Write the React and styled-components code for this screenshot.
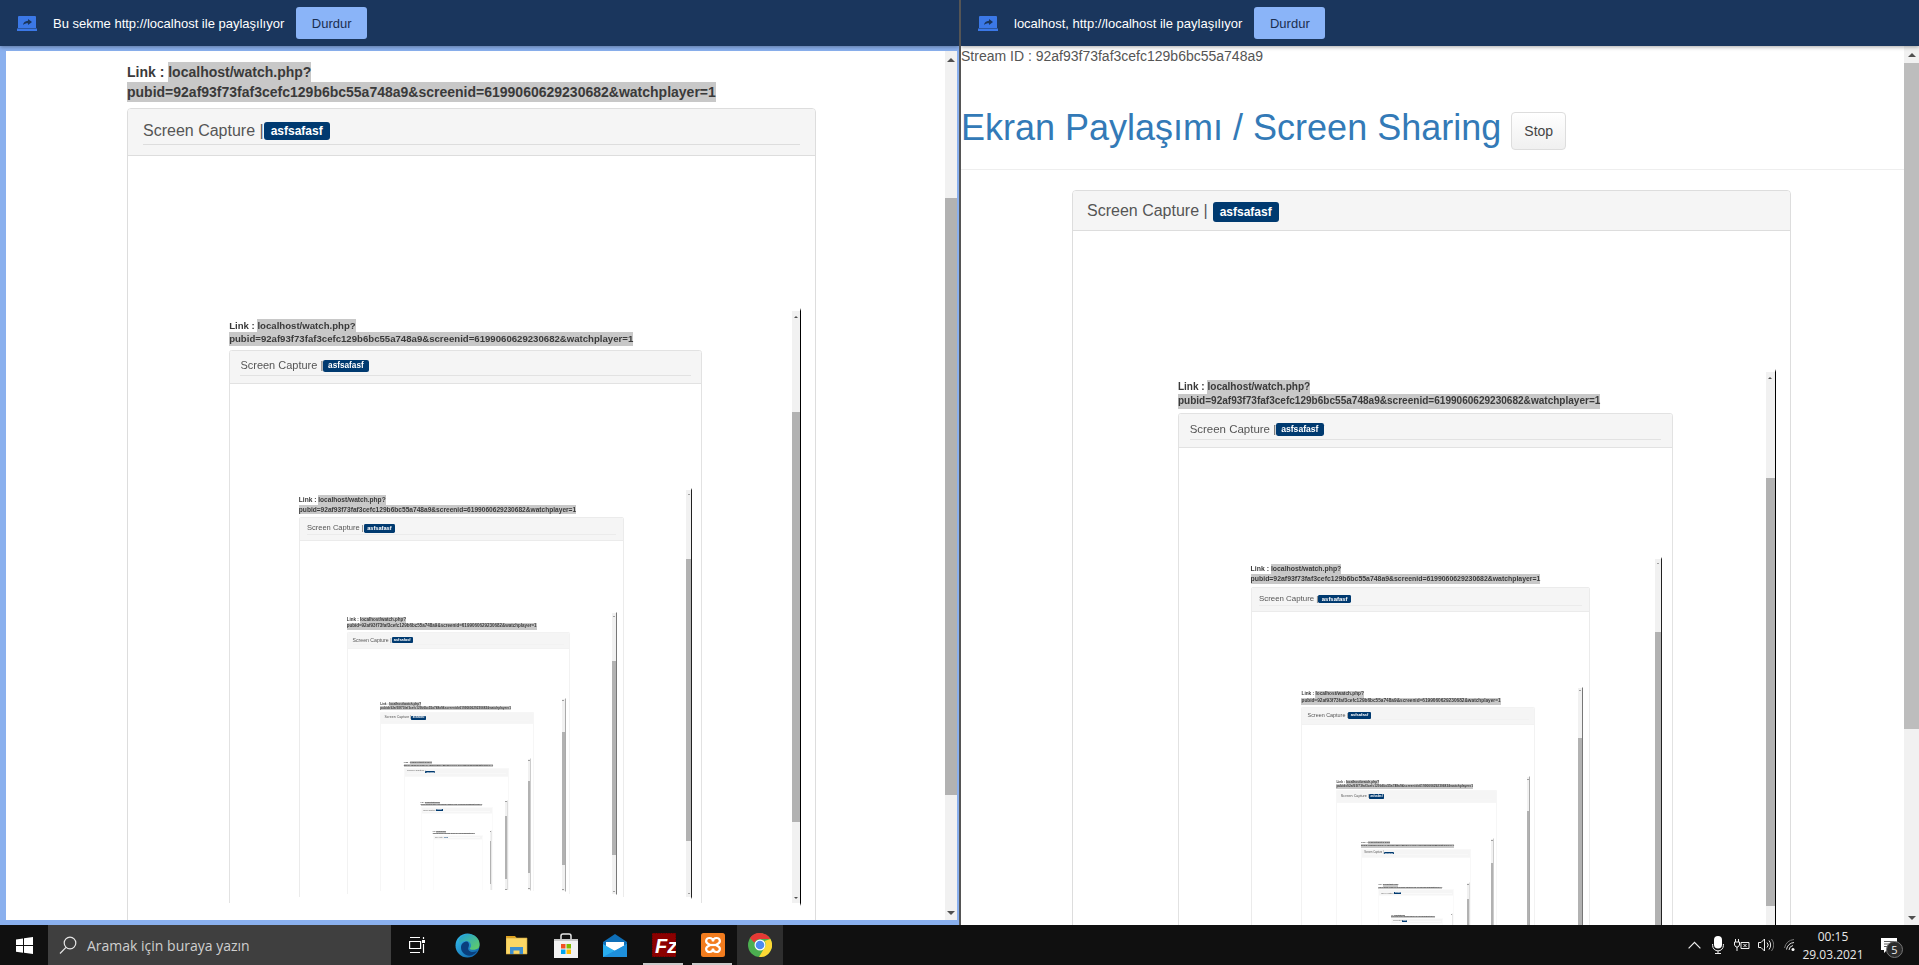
import React from 'react'
import styled, { createGlobalStyle } from 'styled-components'

const LINK_URL = 'pubid=92af93f73faf3cefc129b6bc55a748a9&screenid=6199060629230682&watchplayer=1'
const NESTED_ZOOM = 0.687

// thin lines can't go under 1px when zoomed, so they fade with the depth instead
const EDGE_COLORS = ['#000', '#000', '#222', '#777', '#aaa', '#ccc', '#ddd', '#e8e8e8']
const LINE_COLORS = ['#ddd', '#e2e2e2', '#ebebeb', '#f2f2f2', '#f6f6f6', '#f8f8f8', '#fafafa', '#fbfbfb']
const BLURS = [0, 0.25, 0.45, 0.65, 0.7, 0.7, 0.7, 0.7]

const GlobalStyle = createGlobalStyle`
  html, body { margin: 0; padding: 0; overflow: hidden; background: #fff; }
  * { box-sizing: border-box; }
  body { font-family: "Liberation Sans", Arial, sans-serif; font-size: 14px; color: #333; }
`

const Screen = styled.div`
  width: 1919px;
  height: 965px;
  display: flex;
  flex-direction: column;
  overflow: hidden;
`
const Panes = styled.div`
  height: 925px;
  display: flex;
`
const SharePane = styled.div`
  width: ${p => p.$width}px;
  flex: none;
  display: flex;
  flex-direction: column;
  overflow: hidden;
  background: #fff;
`
const Divider = styled.div`
  width: 2px;
  flex: none;
  background: #555;
`
const InfoBar = styled.div`
  height: 46px;
  flex: none;
  display: flex;
  align-items: center;
  padding-left: ${p => p.$inset}px;
  background: #1a365d;
  box-shadow: 0 1px 4px rgba(0, 0, 0, .35);
  position: relative;
  z-index: 1;
  color: #fff;
  font-size: 13px;
`
const ShareIcon = styled.svg`
  width: 20px;
  height: 15px;
  margin-right: 16px;
  margin-top: 1px;
`
const InfoText = styled.span`
  margin-right: 12px;
  white-space: nowrap;
`
const StopShare = styled.button`
  width: 71px;
  height: 32px;
  border: 0;
  border-radius: 3px;
  background: #8ab4f8;
  color: #1a2f50;
  font: 13px "Liberation Sans", Arial, sans-serif;
`

/* one captured tab, nested copies are the same thing zoomed down */
const Frame = styled.div`
  width: 959px;
  height: ${p => (p.$root ? 879 : 870)}px;
  flex: none;
  display: flex;
  overflow: hidden;
  background: #fff;
  border-style: solid;
  border-width: 5px 2px 5px 6px;
  border-color: ${p => (p.$root ? '#8ab0ee' : `#fff ${p.$edge} #fff #fff`)};
  ${p => !p.$root && `zoom: ${p.$zoom}; filter: blur(${p.$blur}px);`}
`
const TabPage = styled.div`
  flex: 1;
  min-width: 0;
  padding: 11px 0 0 121px;
`
const LinkLine = styled.div`
  font-weight: bold;
  line-height: 20px;
  white-space: nowrap;
  margin-bottom: 6px;
  color: #3a3a3a;
`
const Selected = styled.span`
  display: inline-block;
  height: 20px;
  background: #c8c8c8;
`
const Panel = styled.div`
  width: ${p => p.$width}px;
  border: 1px solid ${p => p.$line};
  border-radius: 4px;
  background: #fff;
`
const PanelHead = styled.div`
  background: #f5f5f5;
  border-bottom: 1px solid ${p => p.$line};
  border-radius: 3px 3px 0 0;
  padding: ${p => (p.$lined ? '12px 15px 10px' : '10px 14px 8px')};
`
const TitleRow = styled.div`
  height: ${p => (p.$lined ? 24 : 21)}px;
  display: flex;
  align-items: flex-start;
  border-bottom: ${p => (p.$lined ? `1px solid ${p.$line}` : '0')};
  font-size: 16px;
  line-height: 19px;
  color: #555;
  white-space: nowrap;
`
const Badge = styled.span`
  height: ${p => (p.$lined ? 18 : 20)}px;
  margin: ${p => (p.$lined ? '1px 0 0 0' : '1px 0 0 5px')};
  padding: 0 7px;
  border-radius: 3px;
  background: #003a70;
  color: #fff;
  font-size: 12px;
  font-weight: bold;
  line-height: ${p => (p.$lined ? 18 : 20)}px;
`
const PanelBody = styled.div`
  min-height: 1000px;
  padding: ${p => p.$top}px 0 0 ${p => p.$left}px;
`

const ScrollTrack = styled.div`
  width: ${p => p.$width}px;
  flex: none;
  display: flex;
  flex-direction: column;
  background: #f1f1f1;
`
const ScrollArrow = styled.div`
  height: ${p => (p.$down ? 15 : 17)}px;
  flex: none;
  margin-top: ${p => (p.$down ? 'auto' : '0')};
  display: flex;
  align-items: center;
  justify-content: center;
  &::after {
    content: '';
    border-left: 4px solid transparent;
    border-right: 4px solid transparent;
    ${p => (p.$down ? 'border-top: 4px solid #505050;' : 'border-bottom: 4px solid #505050;')}
  }
`
const ScrollThumb = styled.div`
  height: ${p => p.$height}px;
  flex: none;
  margin-top: ${p => p.$top}px;
  background: ${p => p.$color};
`

const RightPage = styled.div`
  flex: 1;
  min-height: 0;
  display: flex;
`
const RightColumn = styled.div`
  flex: 1;
  min-width: 0;
  overflow: hidden;
`
const StreamId = styled.div`
  line-height: 20px;
  color: #555;
`
const PageHead = styled.div`
  display: flex;
  align-items: center;
  padding: 46px 0 19px 0;
  border-bottom: 1px solid #eee;
  margin-bottom: 20px;
`
const Title = styled.h1`
  margin: -6px 0 0;
  font-size: 36px;
  font-weight: normal;
  line-height: 38px;
  color: #337ab7;
  white-space: nowrap;
`
const StopButton = styled.button`
  width: 55px;
  height: 38px;
  margin-left: 10px;
  border: 1px solid #ddd;
  border-radius: 4px;
  background: linear-gradient(#fff, #f0f0f0);
  color: #444;
  font: 14px "Liberation Sans", Arial, sans-serif;
`
const PanelSlot = styled.div`
  margin-left: 111px;
`

const Taskbar = styled.div`
  height: 40px;
  flex: none;
  display: flex;
  align-items: stretch;
  background: #101010;
  color: #eee;
`
const StartButton = styled.div`
  width: 48px;
  display: flex;
  align-items: center;
  justify-content: center;
`
const SearchBox = styled.div`
  width: 343px;
  display: flex;
  align-items: center;
  gap: 10px;
  padding-left: 11px;
  background: #3f3f3f;
  color: #cfcfcf;
  font: 14px "Open Sans", "Noto Sans", sans-serif;
  white-space: nowrap;
`
const Slot = styled.div`
  width: ${p => p.$width || 49}px;
  flex: none;
  position: relative;
  display: flex;
  align-items: center;
  justify-content: center;
  background: ${p => (p.$active ? '#2e2e2e' : 'transparent')};
  ${p => p.$running && `
    &::after {
      content: '';
      position: absolute;
      left: 4px;
      right: 5px;
      bottom: 0;
      height: 2px;
      background: #c9c9c9;
    }
  `}
`
const Tray = styled.div`
  margin-left: auto;
  display: flex;
  align-items: stretch;
  padding-right: 5px;
`
const TrayIcon = styled.div`
  width: 24px;
  display: flex;
  align-items: center;
  justify-content: center;
`
const Clock = styled.div`
  width: 62px;
  display: flex;
  flex-direction: column;
  align-items: center;
  justify-content: center;
  gap: 3px;
  font: 12px/15px "Open Sans", "Noto Sans", sans-serif;
  color: #e8e8e8;
`
const Notify = styled.div`
  width: 50px;
  position: relative;
  display: flex;
  align-items: center;
  justify-content: center;
`
const NotifyCount = styled.span`
  position: absolute;
  left: 22px;
  top: 16px;
  width: 17px;
  height: 17px;
  border-radius: 50%;
  border: 1px solid #777;
  background: #2b2b2b;
  color: #eee;
  font: 11px/15px "Open Sans", sans-serif;
  text-align: center;
`

const Capture = ({ depth, level = 0, zoom = 1, scale = 1 }) => {
  const root = level === 0
  const total = scale * zoom
  const line = LINE_COLORS[level]
  const edge = EDGE_COLORS[level]
  const blur = BLURS[level] / total
  return (
    <Frame $root={root} $zoom={zoom} $edge={edge} $blur={blur}>
      <TabPage>
        <LinkLine>
          Link : <Selected>localhost/watch.php?</Selected>
          <br />
          <Selected>{LINK_URL}</Selected>
        </LinkLine>
        <Panel $width={689} $line={line}>
          <PanelHead $lined $line={line}>
            <TitleRow $lined $line={line}>
              Screen Capture |<Badge $lined>asfsafasf</Badge>
            </TitleRow>
          </PanelHead>
          <PanelBody $top={152} $left={14}>
            {depth > 0 && <Capture depth={depth - 1} level={level + 1} zoom={NESTED_ZOOM} scale={total} />}
          </PanelBody>
        </Panel>
      </TabPage>
      <ScrollTrack $width={12}>
        <ScrollArrow />
        <ScrollThumb $top={130} $height={597} $color="#b2b2b2" />
        <ScrollArrow $down />
      </ScrollTrack>
    </Frame>
  )
}

const ScreenShareIcon = () => (
  <ShareIcon viewBox="0 0 20 15">
    <path d="M2 0h16a1 1 0 0 1 1 1v11H1V1a1 1 0 0 1 1-1zM0 12.600h20V15H0z" fill="#3b78e7" />
    <path d="M6 9c.4-2.600 2-4 5-4.200V3l4 3-4 3V7.200C8.800 7.200 7.200 7.800 6 9z" fill="#1a365d" />
  </ShareIcon>
)

const WindowsLogo = () => (
  <svg width="17" height="17" viewBox="0 0 17 17">
    <path d="M0 2.400l7-1v6.700H0zM8 1.300L17 0v8.100H8zM0 9h7v6.700l-7-1zM8 9h9v8l-9-1.300z" fill="#fff" />
  </svg>
)
const SearchIcon = () => (
  <svg width="18" height="18" viewBox="0 0 18 18" fill="none" stroke="#e6e6e6" strokeWidth="1.200">
    <circle cx="11" cy="7" r="5.800" />
    <path d="M7 11.400 1 17.500" />
  </svg>
)
const TaskViewIcon = () => (
  <svg width="17" height="18" viewBox="0 0 17 18" fill="none" stroke="#fff" strokeWidth="1.200">
    <path d="M1 1.500h10M1 16.500h10M.6 5.500h11v7H.6z" />
    <path d="M14.500 1v2M14.500 8v9" />
    <rect x="13" y="4" width="3" height="3" fill="#fff" stroke="none" />
  </svg>
)
const EdgeIcon = () => (
  <svg width="25" height="25" viewBox="0 0 25 25">
    <defs>
      <linearGradient id="edgeA" x1="0" y1="0" x2="1" y2="1">
        <stop offset="0" stopColor="#35c1f1" />
        <stop offset="1" stopColor="#0c59a4" />
      </linearGradient>
      <linearGradient id="edgeB" x1="0" y1="0" x2="1" y2="1">
        <stop offset="0" stopColor="#1e9fdc" />
        <stop offset="1" stopColor="#66d05c" />
      </linearGradient>
    </defs>
    <circle cx="12.500" cy="12.500" r="12" fill="url(#edgeA)" />
    <path d="M4 6C8 .5 18-1 23 6c2 3 2 7 .5 9-2 2-8 2.500-9 .5 2.500-1.500 2-7-2.500-7.500C8 7.500 5.500 9 4.500 11z" fill="url(#edgeB)" />
    <path d="M12 8.500c-3.500 0-6 2.500-6 6 0 5 5 9 10 8 2.500-.5 5-2.500 6-4.500-3 2-7.500 1-8.500-1-1-2 .5-3 .5-5 0-1.800-1-3.500-2-3.500z" fill="#0a3f7d" />
  </svg>
)
const FolderIcon = () => (
  <svg width="22" height="21" viewBox="0 0 22 21">
    <path d="M0 1h9l2 2.500h-11z" fill="#e0a21e" />
    <path d="M0 3h21v16H0z" fill="#fcd765" stroke="#caa23e" strokeWidth=".6" />
    <path d="M4 19v-7h13v7h-3.500v-3.500h-6V19z" fill="#3e8fd0" />
  </svg>
)
const StoreIcon = () => (
  <svg width="24" height="25" viewBox="0 0 24 25">
    <path d="M7 6V3a2 2 0 0 1 2-2h6a2 2 0 0 1 2 2v3" fill="none" stroke="#e6e6e6" strokeWidth="1.500" />
    <path d="M0 6h24v19H0z" fill="#f2f2f2" />
    <path d="M0 6h24v2H0z" fill="#c8c8c8" />
    <rect x="7" y="11" width="4.500" height="4.500" fill="#f25022" />
    <rect x="12.500" y="11" width="4.500" height="4.500" fill="#7fba00" />
    <rect x="7" y="16.500" width="4.500" height="4.500" fill="#00a4ef" />
    <rect x="12.500" y="16.500" width="4.500" height="4.500" fill="#ffb900" />
  </svg>
)
const MailIcon = () => (
  <svg width="24" height="23" viewBox="0 0 24 23">
    <path d="M12 0l12 8v15H0V8z" fill="#0e6fb8" />
    <path d="M3 8h18v5l-9 4-9-4z" fill="#fff" />
    <path d="M0 10l12 7 12-7v13H0z" fill="#29aef0" />
    <path d="M24 10v13H0z" fill="#1e90dc" />
  </svg>
)
const FileZillaIcon = () => (
  <svg width="24" height="24" viewBox="0 0 24 24">
    <rect width="24" height="24" fill="#8b0000" stroke="#4a0000" strokeDasharray="1.500 1" />
    <text x="3" y="20" fontFamily="Liberation Sans, sans-serif" fontSize="20" fontWeight="bold" fontStyle="italic" fill="#fff">Fz</text>
  </svg>
)
const XamppIcon = () => (
  <svg width="24" height="24" viewBox="0 0 24 24">
    <rect width="24" height="24" rx="2.500" fill="#f27c1e" />
    <path
      d="M8.500 5C4.800 5 4 9 7 10.800L9 12l-2 1.200C4 15 4.800 19 8.500 19c2 0 3.500-1.500 3.500-3.500 0 2 1.500 3.500 3.500 3.500 3.700 0 4.500-4 1.500-5.800L15 12l2-1.200C20 9 19.200 5 15.500 5c-2 0-3.500 1.500-3.500 3.500C12 6.500 10.500 5 8.500 5z"
      fill="none"
      stroke="#fff"
      strokeWidth="2.200"
    />
    <path d="M8 12h8" stroke="#fff" strokeWidth="2.200" />
  </svg>
)
const ChromeIcon = () => (
  <svg width="24" height="24" viewBox="0 0 24 24">
    <circle cx="12" cy="12" r="12" fill="#4caf50" />
    <path d="M12 0a12 12 0 0 1 10.400 6H12a6 6 0 0 0-5.600 3.800L2 5a12 12 0 0 1 10-5z" fill="#e53935" />
    <path d="M22.400 6A12 12 0 0 1 11 24l5-8.500A6 6 0 0 0 16.500 8z" fill="#fdd835" />
    <circle cx="12" cy="12" r="5.500" fill="#fff" />
    <circle cx="12" cy="12" r="4.300" fill="#4d8af0" />
  </svg>
)

const ChevronIcon = () => (
  <svg width="13" height="8" viewBox="0 0 13 8" fill="none" stroke="#eee" strokeWidth="1.200">
    <path d="M.6 7.400 6.500 1.300l5.900 6.100" />
  </svg>
)
const MicIcon = () => (
  <svg width="12" height="18" viewBox="0 0 12 18">
    <rect x="2" y="0" width="8" height="12.500" rx="4" fill="#fff" />
    <path d="M.6 8v1.500a5.400 5.400 0 0 0 10.800 0V8M6 15v2.500M3 17.500h6" fill="none" stroke="#eee" strokeWidth="1" />
  </svg>
)
const BatteryIcon = () => (
  <svg width="16" height="12" viewBox="0 0 16 12" fill="none" stroke="#eee" strokeWidth="1">
    <path d="M1.500 0v3M4.500 0v3M.5 3h5v3l-1.500 2H2L.5 6zM3 8v4" />
    <path d="M7 3.500h8v6H7zM9.500 5l3 3M12.500 5l-3 3" />
  </svg>
)
const SpeakerIcon = () => (
  <svg width="16" height="14" viewBox="0 0 16 14" fill="none" stroke="#eee" strokeWidth="1">
    <path d="M.5 4.500h2.500L6.500 1v12L3 9.500H.5z" />
    <path d="M9 4.500a3.500 3.500 0 0 1 0 5M11 2.500a7 7 0 0 1 0 9" />
    <path d="M13.500 1a10 10 0 0 1 0 12" stroke="#777" />
  </svg>
)
const WifiIcon = () => (
  <svg width="13" height="13" viewBox="0 0 13 13" fill="none" strokeWidth="1">
    <path d="M.5 9A11 11 0 0 1 10 .5" stroke="#777" />
    <path d="M2.500 10.500A8 8 0 0 1 10 3.500M5 11a5 5 0 0 1 4-4.500" stroke="#ddd" />
    <circle cx="9" cy="10.500" r="1.500" fill="#fff" />
  </svg>
)
const MessageIcon = () => (
  <svg width="16" height="15" viewBox="0 0 16 15">
    <path d="M0 0h16v12H6l-3 3v-3H0z" fill="#fff" />
    <path d="M3 3.500h10M3 6h10M3 8.500h10" stroke="#333" strokeWidth=".8" />
  </svg>
)

const App = () => (
  <Screen>
    <GlobalStyle />
    <Panes>
      <SharePane $width={959}>
        <InfoBar $inset={17}>
          <ScreenShareIcon />
          <InfoText>Bu sekme http://localhost ile paylaşılıyor</InfoText>
          <StopShare>Durdur</StopShare>
        </InfoBar>
        <Capture depth={7} />
      </SharePane>
      <Divider />
      <SharePane $width={958}>
        <InfoBar $inset={17}>
          <ScreenShareIcon />
          <InfoText>localhost, http://localhost ile paylaşılıyor</InfoText>
          <StopShare>Durdur</StopShare>
        </InfoBar>
        <RightPage>
          <RightColumn>
            <StreamId>Stream ID : 92af93f73faf3cefc129b6bc55a748a9</StreamId>
            <PageHead>
              <Title>Ekran Paylaşımı / Screen Sharing</Title>
              <StopButton>Stop</StopButton>
            </PageHead>
            <PanelSlot>
              <Panel $width={719} $line="#ddd">
                <PanelHead $line="#ddd">
                  <TitleRow>
                    Screen Capture |<Badge>asfsafasf</Badge>
                  </TitleRow>
                </PanelHead>
                <PanelBody $top={138} $left={14}>
                  <Capture depth={6} level={1} zoom={0.718} />
                </PanelBody>
              </Panel>
            </PanelSlot>
          </RightColumn>
          <ScrollTrack $width={15}>
            <ScrollArrow />
            <ScrollThumb $top={0} $height={666} $color="#bdbdbd" />
            <ScrollArrow $down />
          </ScrollTrack>
        </RightPage>
      </SharePane>
    </Panes>
    <Taskbar>
      <StartButton><WindowsLogo /></StartButton>
      <SearchBox>
        <SearchIcon />
        Aramak için buraya yazın
      </SearchBox>
      <Slot $width={52}><TaskViewIcon /></Slot>
      <Slot><EdgeIcon /></Slot>
      <Slot><FolderIcon /></Slot>
      <Slot><StoreIcon /></Slot>
      <Slot><MailIcon /></Slot>
      <Slot $running><FileZillaIcon /></Slot>
      <Slot $running><XamppIcon /></Slot>
      <Slot $active $width={46}><ChromeIcon /></Slot>
      <Tray>
        <TrayIcon><ChevronIcon /></TrayIcon>
        <TrayIcon><MicIcon /></TrayIcon>
        <TrayIcon><BatteryIcon /></TrayIcon>
        <TrayIcon><SpeakerIcon /></TrayIcon>
        <TrayIcon><WifiIcon /></TrayIcon>
        <Clock>
          <span>00:15</span>
          <span>29.03.2021</span>
        </Clock>
        <Notify>
          <MessageIcon />
          <NotifyCount>5</NotifyCount>
        </Notify>
      </Tray>
    </Taskbar>
  </Screen>
)

export default App
